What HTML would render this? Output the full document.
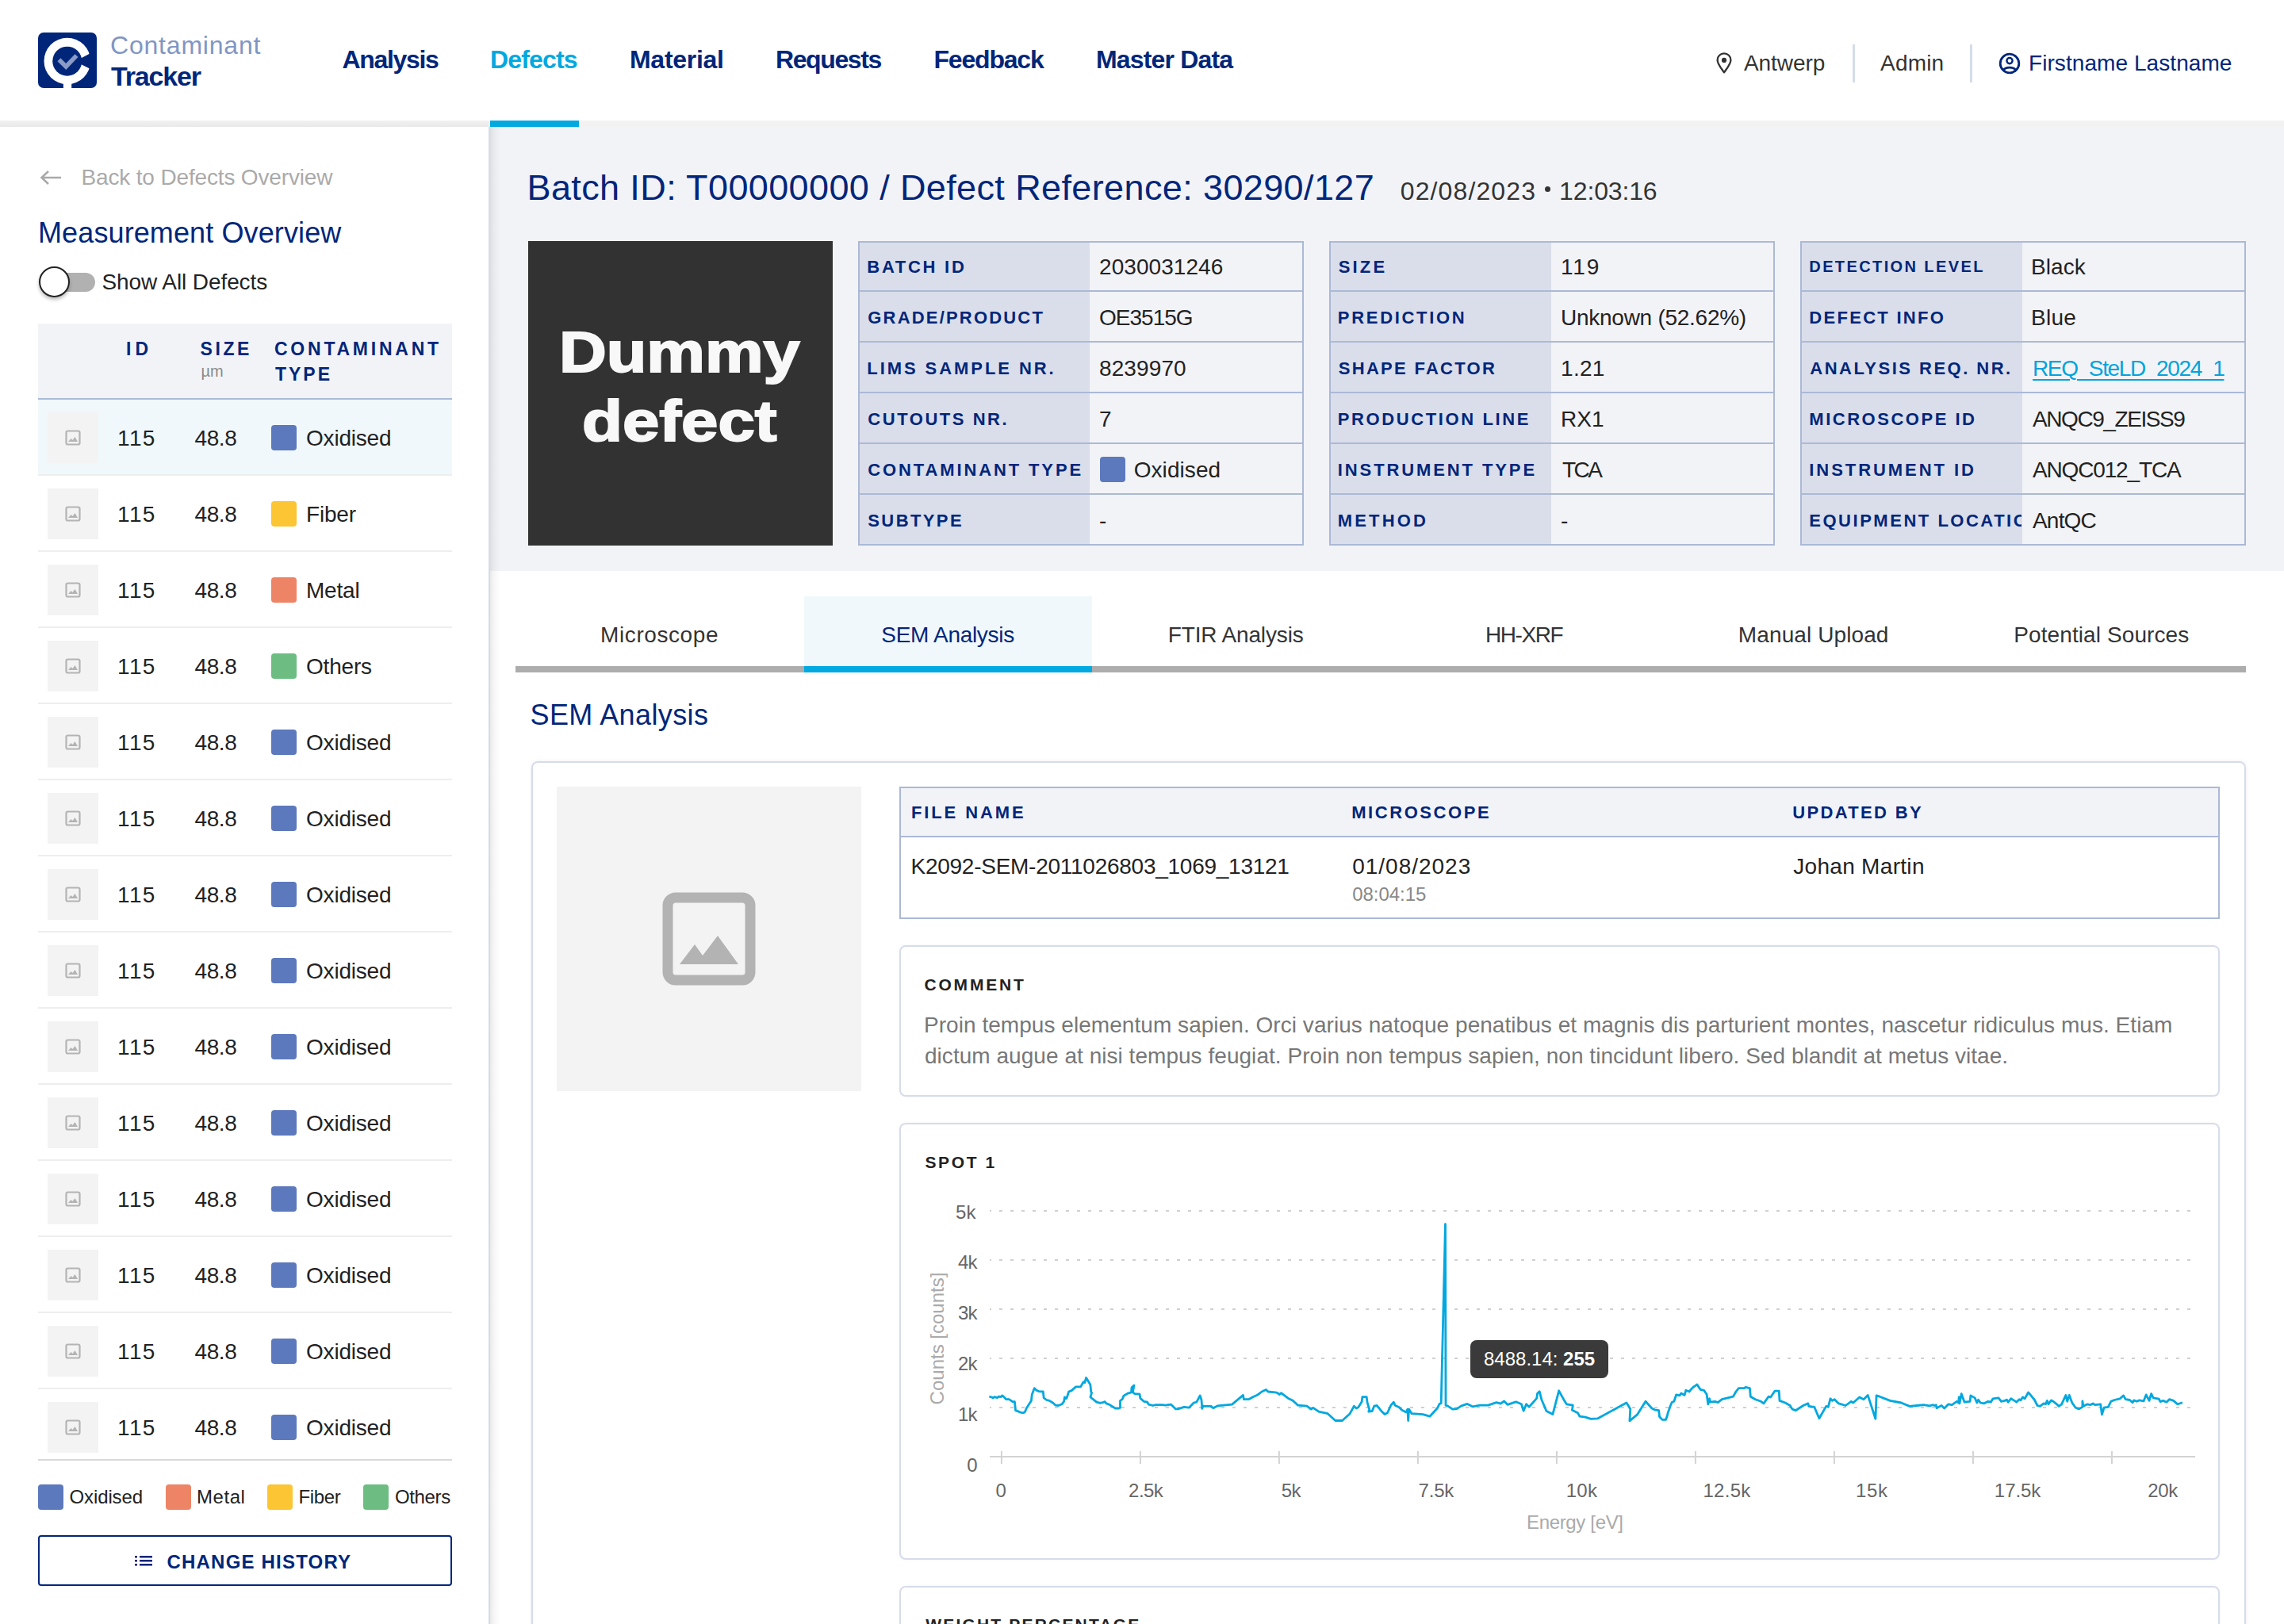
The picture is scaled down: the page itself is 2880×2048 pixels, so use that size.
<!DOCTYPE html>
<html><head><meta charset="utf-8">
<style>
*{box-sizing:border-box;margin:0;padding:0}
html,body{width:2880px;height:2048px;overflow:hidden;background:#fff;font-family:"Liberation Sans",sans-serif;color:#222}
@media (max-width:1600px){html{zoom:0.5}}
.a{position:absolute}
.t{position:absolute;white-space:nowrap}
</style></head><body>

<div class="a" style="left:616px;top:152px;width:2264px;height:568px;background:#f2f3f7"></div>
<div class="a" style="left:0;top:0;width:2880px;height:152px;background:#fff"></div>
<div class="a" style="left:0;top:152px;width:2880px;height:8px;background:#f2f2f2"></div><div class="a" style="left:0;top:152px;width:616px;height:8px;background:linear-gradient(#f1f1f1,#e9e9e9)"></div>
<div class="a" style="left:618px;top:152px;width:112px;height:8px;background:#00a9e0"></div>
<svg class="a" style="left:48px;top:41px" width="74" height="70" viewBox="0 0 74 70">
<rect x="0" y="0" width="74" height="70" rx="7" fill="#00267a"/>
<circle cx="36.8" cy="36" r="29.3" fill="#fff"/>
<circle cx="36.75" cy="36.15" r="18.5" fill="#00267a"/>
<polygon points="53,33 74,21.9 74,50.1 53,39.4" fill="#00267a"/>
<rect x="31.9" y="60" width="10.3" height="11" fill="#fff"/>
<polyline points="26.4,34.2 35.2,43 48.5,29.2" fill="none" stroke="#8a9bc6" stroke-width="5.5"/>
</svg>
<svg class="a" style="left:2162px;top:65px" width="24" height="30" viewBox="0 0 24 30">
<path d="M12 26.3 C7.6 20 3.6 15.6 3.6 10.7 A8.4 8.4 0 0 1 20.4 10.7 C20.4 15.6 16.4 20 12 26.3 Z" fill="none" stroke="#333" stroke-width="2.3" stroke-linejoin="round"/>
<circle cx="12" cy="10.9" r="3.1" fill="#333"/></svg>
<div class="a" style="left:2336px;top:56px;width:3px;height:48px;background:#d5dcea"></div>
<div class="a" style="left:2484px;top:56px;width:3px;height:48px;background:#d5dcea"></div>
<svg class="a" style="left:2519px;top:65px" width="30" height="30" viewBox="0 0 30 30">
<circle cx="15" cy="15" r="11.8" fill="none" stroke="#00267a" stroke-width="2.8"/>
<circle cx="15" cy="11.6" r="3.6" fill="none" stroke="#00267a" stroke-width="2.4"/>
<path d="M7 23.5 C10 19 20 19 23 23.5" fill="none" stroke="#00267a" stroke-width="2.6"/></svg>
<div class="a" style="left:0;top:160px;width:616px;height:1888px;background:#fff"></div>
<div class="a" style="left:616px;top:160px;width:2px;height:1888px;background:#d7dcea"></div>
<div class="a" style="left:618px;top:160px;width:14px;height:1888px;background:linear-gradient(90deg,rgba(0,0,0,0.085),rgba(0,0,0,0.035) 35%,rgba(0,0,0,0) 100%)"></div>
<svg class="a" style="left:48px;top:212px" width="32" height="24" viewBox="0 0 32 24">
<path d="M29 12 H5 M13 4 L4.5 12 L13 20" fill="none" stroke="#aaa" stroke-width="2.6"/></svg>
<div class="a" style="left:62px;top:344px;width:58px;height:24px;border-radius:12px;background:#b1b1b1"></div>
<div class="a" style="left:48.5px;top:336px;width:39px;height:39px;border-radius:50%;background:#fff;border:2.5px solid #222;box-shadow:0 3px 4px rgba(0,0,0,0.25)"></div>
<div class="a" style="left:48px;top:408px;width:522px;height:94px;background:#f2f3f7"></div>
<div class="a" style="left:48px;top:502px;width:522px;height:2px;background:#a9b9d8"></div>
<div class="a" style="left:48px;top:504px;width:522px;height:94px;background:#f0f8fb"></div>
<div class="a" style="left:48px;top:598px;width:522px;height:2px;background:#eeeeee"></div>
<div class="a" style="left:60px;top:520px;width:64px;height:64px;background:#f3f3f3"></div>
<div class="a" style="left:82px;top:542px;width:20px;height:20px"><svg width="20" height="20" viewBox="0 0 20 20"><rect x="1.5" y="1.5" width="17" height="17" rx="2" fill="none" stroke="#b4b4b4" stroke-width="2.2"/><path d="M4 15 L7.5 11 L9.5 13 L12.5 9 L16 15 Z" fill="#b4b4b4"/></svg></div>
<div class="a" style="left:342px;top:536px;width:32px;height:32px;border-radius:4px;background:#5d79bd"></div>
<div class="a" style="left:48px;top:694px;width:522px;height:2px;background:#eeeeee"></div>
<div class="a" style="left:60px;top:616px;width:64px;height:64px;background:#f3f3f3"></div>
<div class="a" style="left:82px;top:638px;width:20px;height:20px"><svg width="20" height="20" viewBox="0 0 20 20"><rect x="1.5" y="1.5" width="17" height="17" rx="2" fill="none" stroke="#b4b4b4" stroke-width="2.2"/><path d="M4 15 L7.5 11 L9.5 13 L12.5 9 L16 15 Z" fill="#b4b4b4"/></svg></div>
<div class="a" style="left:342px;top:632px;width:32px;height:32px;border-radius:4px;background:#fbc533"></div>
<div class="a" style="left:48px;top:790px;width:522px;height:2px;background:#eeeeee"></div>
<div class="a" style="left:60px;top:712px;width:64px;height:64px;background:#f3f3f3"></div>
<div class="a" style="left:82px;top:734px;width:20px;height:20px"><svg width="20" height="20" viewBox="0 0 20 20"><rect x="1.5" y="1.5" width="17" height="17" rx="2" fill="none" stroke="#b4b4b4" stroke-width="2.2"/><path d="M4 15 L7.5 11 L9.5 13 L12.5 9 L16 15 Z" fill="#b4b4b4"/></svg></div>
<div class="a" style="left:342px;top:728px;width:32px;height:32px;border-radius:4px;background:#ee8466"></div>
<div class="a" style="left:48px;top:886px;width:522px;height:2px;background:#eeeeee"></div>
<div class="a" style="left:60px;top:808px;width:64px;height:64px;background:#f3f3f3"></div>
<div class="a" style="left:82px;top:830px;width:20px;height:20px"><svg width="20" height="20" viewBox="0 0 20 20"><rect x="1.5" y="1.5" width="17" height="17" rx="2" fill="none" stroke="#b4b4b4" stroke-width="2.2"/><path d="M4 15 L7.5 11 L9.5 13 L12.5 9 L16 15 Z" fill="#b4b4b4"/></svg></div>
<div class="a" style="left:342px;top:824px;width:32px;height:32px;border-radius:4px;background:#6dbd82"></div>
<div class="a" style="left:48px;top:982px;width:522px;height:2px;background:#eeeeee"></div>
<div class="a" style="left:60px;top:904px;width:64px;height:64px;background:#f3f3f3"></div>
<div class="a" style="left:82px;top:926px;width:20px;height:20px"><svg width="20" height="20" viewBox="0 0 20 20"><rect x="1.5" y="1.5" width="17" height="17" rx="2" fill="none" stroke="#b4b4b4" stroke-width="2.2"/><path d="M4 15 L7.5 11 L9.5 13 L12.5 9 L16 15 Z" fill="#b4b4b4"/></svg></div>
<div class="a" style="left:342px;top:920px;width:32px;height:32px;border-radius:4px;background:#5d79bd"></div>
<div class="a" style="left:48px;top:1078px;width:522px;height:2px;background:#eeeeee"></div>
<div class="a" style="left:60px;top:1000px;width:64px;height:64px;background:#f3f3f3"></div>
<div class="a" style="left:82px;top:1022px;width:20px;height:20px"><svg width="20" height="20" viewBox="0 0 20 20"><rect x="1.5" y="1.5" width="17" height="17" rx="2" fill="none" stroke="#b4b4b4" stroke-width="2.2"/><path d="M4 15 L7.5 11 L9.5 13 L12.5 9 L16 15 Z" fill="#b4b4b4"/></svg></div>
<div class="a" style="left:342px;top:1016px;width:32px;height:32px;border-radius:4px;background:#5d79bd"></div>
<div class="a" style="left:48px;top:1174px;width:522px;height:2px;background:#eeeeee"></div>
<div class="a" style="left:60px;top:1096px;width:64px;height:64px;background:#f3f3f3"></div>
<div class="a" style="left:82px;top:1118px;width:20px;height:20px"><svg width="20" height="20" viewBox="0 0 20 20"><rect x="1.5" y="1.5" width="17" height="17" rx="2" fill="none" stroke="#b4b4b4" stroke-width="2.2"/><path d="M4 15 L7.5 11 L9.5 13 L12.5 9 L16 15 Z" fill="#b4b4b4"/></svg></div>
<div class="a" style="left:342px;top:1112px;width:32px;height:32px;border-radius:4px;background:#5d79bd"></div>
<div class="a" style="left:48px;top:1270px;width:522px;height:2px;background:#eeeeee"></div>
<div class="a" style="left:60px;top:1192px;width:64px;height:64px;background:#f3f3f3"></div>
<div class="a" style="left:82px;top:1214px;width:20px;height:20px"><svg width="20" height="20" viewBox="0 0 20 20"><rect x="1.5" y="1.5" width="17" height="17" rx="2" fill="none" stroke="#b4b4b4" stroke-width="2.2"/><path d="M4 15 L7.5 11 L9.5 13 L12.5 9 L16 15 Z" fill="#b4b4b4"/></svg></div>
<div class="a" style="left:342px;top:1208px;width:32px;height:32px;border-radius:4px;background:#5d79bd"></div>
<div class="a" style="left:48px;top:1366px;width:522px;height:2px;background:#eeeeee"></div>
<div class="a" style="left:60px;top:1288px;width:64px;height:64px;background:#f3f3f3"></div>
<div class="a" style="left:82px;top:1310px;width:20px;height:20px"><svg width="20" height="20" viewBox="0 0 20 20"><rect x="1.5" y="1.5" width="17" height="17" rx="2" fill="none" stroke="#b4b4b4" stroke-width="2.2"/><path d="M4 15 L7.5 11 L9.5 13 L12.5 9 L16 15 Z" fill="#b4b4b4"/></svg></div>
<div class="a" style="left:342px;top:1304px;width:32px;height:32px;border-radius:4px;background:#5d79bd"></div>
<div class="a" style="left:48px;top:1462px;width:522px;height:2px;background:#eeeeee"></div>
<div class="a" style="left:60px;top:1384px;width:64px;height:64px;background:#f3f3f3"></div>
<div class="a" style="left:82px;top:1406px;width:20px;height:20px"><svg width="20" height="20" viewBox="0 0 20 20"><rect x="1.5" y="1.5" width="17" height="17" rx="2" fill="none" stroke="#b4b4b4" stroke-width="2.2"/><path d="M4 15 L7.5 11 L9.5 13 L12.5 9 L16 15 Z" fill="#b4b4b4"/></svg></div>
<div class="a" style="left:342px;top:1400px;width:32px;height:32px;border-radius:4px;background:#5d79bd"></div>
<div class="a" style="left:48px;top:1558px;width:522px;height:2px;background:#eeeeee"></div>
<div class="a" style="left:60px;top:1480px;width:64px;height:64px;background:#f3f3f3"></div>
<div class="a" style="left:82px;top:1502px;width:20px;height:20px"><svg width="20" height="20" viewBox="0 0 20 20"><rect x="1.5" y="1.5" width="17" height="17" rx="2" fill="none" stroke="#b4b4b4" stroke-width="2.2"/><path d="M4 15 L7.5 11 L9.5 13 L12.5 9 L16 15 Z" fill="#b4b4b4"/></svg></div>
<div class="a" style="left:342px;top:1496px;width:32px;height:32px;border-radius:4px;background:#5d79bd"></div>
<div class="a" style="left:48px;top:1654px;width:522px;height:2px;background:#eeeeee"></div>
<div class="a" style="left:60px;top:1576px;width:64px;height:64px;background:#f3f3f3"></div>
<div class="a" style="left:82px;top:1598px;width:20px;height:20px"><svg width="20" height="20" viewBox="0 0 20 20"><rect x="1.5" y="1.5" width="17" height="17" rx="2" fill="none" stroke="#b4b4b4" stroke-width="2.2"/><path d="M4 15 L7.5 11 L9.5 13 L12.5 9 L16 15 Z" fill="#b4b4b4"/></svg></div>
<div class="a" style="left:342px;top:1592px;width:32px;height:32px;border-radius:4px;background:#5d79bd"></div>
<div class="a" style="left:48px;top:1750px;width:522px;height:2px;background:#eeeeee"></div>
<div class="a" style="left:60px;top:1672px;width:64px;height:64px;background:#f3f3f3"></div>
<div class="a" style="left:82px;top:1694px;width:20px;height:20px"><svg width="20" height="20" viewBox="0 0 20 20"><rect x="1.5" y="1.5" width="17" height="17" rx="2" fill="none" stroke="#b4b4b4" stroke-width="2.2"/><path d="M4 15 L7.5 11 L9.5 13 L12.5 9 L16 15 Z" fill="#b4b4b4"/></svg></div>
<div class="a" style="left:342px;top:1688px;width:32px;height:32px;border-radius:4px;background:#5d79bd"></div>
<div class="a" style="left:60px;top:1768px;width:64px;height:64px;background:#f3f3f3"></div>
<div class="a" style="left:82px;top:1790px;width:20px;height:20px"><svg width="20" height="20" viewBox="0 0 20 20"><rect x="1.5" y="1.5" width="17" height="17" rx="2" fill="none" stroke="#b4b4b4" stroke-width="2.2"/><path d="M4 15 L7.5 11 L9.5 13 L12.5 9 L16 15 Z" fill="#b4b4b4"/></svg></div>
<div class="a" style="left:342px;top:1784px;width:32px;height:32px;border-radius:4px;background:#5d79bd"></div>
<div class="a" style="left:48px;top:1840px;width:522px;height:2px;background:#d9d9d9"></div>
<div class="a" style="left:48px;top:1872px;width:32px;height:32px;border-radius:4px;background:#5d79bd"></div>
<div class="a" style="left:209px;top:1872px;width:32px;height:32px;border-radius:4px;background:#ee8466"></div>
<div class="a" style="left:337px;top:1872px;width:32px;height:32px;border-radius:4px;background:#fbc533"></div>
<div class="a" style="left:458px;top:1872px;width:32px;height:32px;border-radius:4px;background:#6dbd82"></div>
<div class="a" style="left:48px;top:1936px;width:522px;height:64px;border:2.5px solid #00267a;border-radius:4px"></div>
<svg class="a" style="left:168px;top:1958px" width="26" height="20" viewBox="0 0 26 20">
<rect x="2" y="4" width="3" height="2.5" fill="#00267a"/><rect x="8" y="4" width="16" height="2.5" fill="#00267a"/>
<rect x="2" y="9" width="3" height="2.5" fill="#00267a"/><rect x="8" y="9" width="16" height="2.5" fill="#00267a"/>
<rect x="2" y="14" width="3" height="2.5" fill="#00267a"/><rect x="8" y="14" width="16" height="2.5" fill="#00267a"/></svg>
<div class="a" style="left:666px;top:304px;width:384px;height:384px;background:#323232"></div>
<div class="a" style="left:1947.8px;top:234.9px;width:7px;height:7px;border-radius:50%;background:#333"></div>
<div class="a" style="left:1082px;top:304px;width:562px;height:384px;border:2px solid #abb9d6;background:#f2f3f7"></div>
<div class="a" style="left:1084px;top:306px;width:290px;height:380px;background:#dadeea"></div>
<div class="a" style="left:1084px;top:366px;width:558px;height:2px;background:#abb9d6"></div>
<div class="a" style="left:1084px;top:430px;width:558px;height:2px;background:#abb9d6"></div>
<div class="a" style="left:1084px;top:494px;width:558px;height:2px;background:#abb9d6"></div>
<div class="a" style="left:1084px;top:558px;width:558px;height:2px;background:#abb9d6"></div>
<div class="a" style="left:1084px;top:622px;width:558px;height:2px;background:#abb9d6"></div>
<div class="a" style="left:1676px;top:304px;width:562px;height:384px;border:2px solid #abb9d6;background:#f2f3f7"></div>
<div class="a" style="left:1678px;top:306px;width:278px;height:380px;background:#dadeea"></div>
<div class="a" style="left:1678px;top:366px;width:558px;height:2px;background:#abb9d6"></div>
<div class="a" style="left:1678px;top:430px;width:558px;height:2px;background:#abb9d6"></div>
<div class="a" style="left:1678px;top:494px;width:558px;height:2px;background:#abb9d6"></div>
<div class="a" style="left:1678px;top:558px;width:558px;height:2px;background:#abb9d6"></div>
<div class="a" style="left:1678px;top:622px;width:558px;height:2px;background:#abb9d6"></div>
<div class="a" style="left:2270px;top:304px;width:562px;height:384px;border:2px solid #abb9d6;background:#f2f3f7"></div>
<div class="a" style="left:2272px;top:306px;width:278px;height:380px;background:#dadeea"></div>
<div class="a" style="left:2272px;top:366px;width:558px;height:2px;background:#abb9d6"></div>
<div class="a" style="left:2272px;top:430px;width:558px;height:2px;background:#abb9d6"></div>
<div class="a" style="left:2272px;top:494px;width:558px;height:2px;background:#abb9d6"></div>
<div class="a" style="left:2272px;top:558px;width:558px;height:2px;background:#abb9d6"></div>
<div class="a" style="left:2272px;top:622px;width:558px;height:2px;background:#abb9d6"></div>
<div class="a" style="left:1387px;top:576px;width:32px;height:32px;border-radius:4px;background:#5d79bd"></div>
<div class="a" style="left:1014px;top:752px;width:363px;height:88px;background:#f0f8fb"></div>
<div class="a" style="left:650px;top:840px;width:2182px;height:8px;background:#adadad"></div>
<div class="a" style="left:1014px;top:840px;width:363px;height:8px;background:#00a9e0"></div>
<div class="a" style="left:670px;top:960px;width:2162px;height:1200px;border:2px solid #d6dcec;border-radius:8px;box-shadow:0 0 5px rgba(0,0,0,0.07)"></div>
<div class="a" style="left:702px;top:992px;width:384px;height:384px;background:#f3f3f3"></div>
<svg class="a" style="left:834px;top:1124px" width="120" height="120" viewBox="0 0 120 120">
<rect x="8" y="8" width="104" height="104" rx="10" fill="none" stroke="#b3b3b3" stroke-width="13"/>
<path d="M23 92 L42 67 L52 81 L71 56 L97 92 Z" fill="#b3b3b3"/></svg>
<div class="a" style="left:1134px;top:992px;width:1665px;height:167px;border:2px solid #abb9d6;background:#fff"></div>
<div class="a" style="left:1136px;top:994px;width:1661px;height:60px;background:#f2f3f7"></div>
<div class="a" style="left:1136px;top:1054px;width:1661px;height:2px;background:#abb9d6"></div>
<div class="a" style="left:1134px;top:1192px;width:1665px;height:191px;border:2px solid #d6dcec;border-radius:8px;box-shadow:0 0 4px rgba(0,0,0,0.04)"></div>
<div class="a" style="left:1134px;top:1416px;width:1665px;height:551px;border:2px solid #d6dcec;border-radius:8px;box-shadow:0 0 4px rgba(0,0,0,0.04)"></div>
<div class="a" style="left:1134px;top:2000px;width:1665px;height:200px;border:2px solid #d6dcec;border-radius:8px;box-shadow:0 0 4px rgba(0,0,0,0.04)"></div>
<svg class="a" style="left:0;top:0" width="2880" height="2048" viewBox="0 0 2880 2048"><line x1="1248" y1="1527.0" x2="2768" y2="1527.0" stroke="#d0d0d0" stroke-width="2" stroke-dasharray="4 10" stroke-dashoffset="2"/><line x1="1248" y1="1589.0" x2="2768" y2="1589.0" stroke="#d0d0d0" stroke-width="2" stroke-dasharray="4 10" stroke-dashoffset="2"/><line x1="1248" y1="1651.0" x2="2768" y2="1651.0" stroke="#d0d0d0" stroke-width="2" stroke-dasharray="4 10" stroke-dashoffset="2"/><line x1="1248" y1="1713.0" x2="2768" y2="1713.0" stroke="#d0d0d0" stroke-width="2" stroke-dasharray="4 10" stroke-dashoffset="2"/><line x1="1248" y1="1775.0" x2="2768" y2="1775.0" stroke="#d0d0d0" stroke-width="2" stroke-dasharray="4 10" stroke-dashoffset="2"/><line x1="1248" y1="1837" x2="2768" y2="1837" stroke="#d3d3d3" stroke-width="2"/><line x1="1262.9" y1="1830" x2="1262.9" y2="1846" stroke="#d3d3d3" stroke-width="2"/><line x1="1437.9" y1="1830" x2="1437.9" y2="1846" stroke="#d3d3d3" stroke-width="2"/><line x1="1612.9" y1="1830" x2="1612.9" y2="1846" stroke="#d3d3d3" stroke-width="2"/><line x1="1787.9" y1="1830" x2="1787.9" y2="1846" stroke="#d3d3d3" stroke-width="2"/><line x1="1962.9" y1="1830" x2="1962.9" y2="1846" stroke="#d3d3d3" stroke-width="2"/><line x1="2137.9" y1="1830" x2="2137.9" y2="1846" stroke="#d3d3d3" stroke-width="2"/><line x1="2312.9" y1="1830" x2="2312.9" y2="1846" stroke="#d3d3d3" stroke-width="2"/><line x1="2487.9" y1="1830" x2="2487.9" y2="1846" stroke="#d3d3d3" stroke-width="2"/><line x1="2662.9" y1="1830" x2="2662.9" y2="1846" stroke="#d3d3d3" stroke-width="2"/><path d="M1247.4 1761.2 L1250.5 1762.0 L1252.3 1762.9 L1254.0 1761.7 L1257.5 1762.6 L1259.3 1761.2 L1261.9 1761.7 L1263.6 1759.9 L1265.4 1761.2 L1268.9 1764.7 L1272.4 1764.7 L1275.0 1766.4 L1276.8 1767.6 L1279.4 1767.6 L1280.6 1778.7 L1283.8 1779.9 L1287.3 1781.3 L1290.8 1781.6 L1292.5 1780.4 L1294.3 1776.0 L1298.7 1769.0 L1300.4 1766.4 L1301.3 1758.5 L1304.4 1750.6 L1306.5 1752.9 L1310.1 1754.7 L1315.3 1755.0 L1316.2 1762.9 L1319.7 1765.5 L1323.2 1766.4 L1327.6 1769.0 L1331.1 1772.2 L1334.6 1772.5 L1338.9 1770.8 L1341.6 1767.3 L1342.5 1762.0 L1344.2 1763.8 L1345.1 1762.9 L1347.7 1755.0 L1351.2 1753.6 L1356.5 1748.9 L1362.6 1748.9 L1366.1 1742.8 L1367.8 1743.6 L1369.6 1737.5 L1374.9 1746.3 L1375.7 1755.0 L1376.6 1756.4 L1374.9 1762.0 L1378.4 1764.7 L1382.7 1768.2 L1387.1 1769.4 L1390.6 1768.7 L1393.2 1767.6 L1395.0 1769.9 L1398.5 1771.1 L1406.4 1776.0 L1410.8 1776.0 L1412.5 1775.2 L1412.5 1766.4 L1415.1 1764.7 L1416.9 1760.3 L1422.1 1757.1 L1426.5 1755.9 L1427.0 1749.8 L1430.0 1747.1 L1428.3 1755.9 L1430.9 1757.7 L1437.0 1758.2 L1437.9 1763.4 L1442.3 1767.3 L1446.7 1768.2 L1448.4 1771.1 L1453.7 1772.5 L1457.2 1771.7 L1465.9 1771.7 L1469.4 1772.2 L1476.4 1771.1 L1482.6 1776.9 L1485.2 1776.9 L1493.1 1774.3 L1499.2 1775.2 L1505.3 1769.0 L1508.8 1768.2 L1513.2 1759.9 L1515.0 1765.5 L1515.8 1776.4 L1516.7 1773.4 L1527.2 1773.4 L1529.8 1775.7 L1535.1 1772.9 L1553.5 1771.1 L1567.5 1759.4 L1568.4 1764.7 L1574.5 1764.7 L1579.8 1761.7 L1585.9 1758.9 L1591.1 1755.0 L1596.4 1752.4 L1599.0 1755.0 L1607.8 1755.9 L1610.4 1756.4 L1613.0 1758.5 L1615.7 1756.8 L1624.4 1763.4 L1629.7 1765.9 L1636.7 1772.2 L1647.9 1773.1 L1653.1 1777.1 L1655.8 1775.3 L1662.8 1780.1 L1674.2 1782.7 L1683.8 1791.5 L1692.5 1791.5 L1702.2 1782.7 L1707.4 1773.1 L1710.1 1776.0 L1712.7 1774.8 L1717.1 1767.8 L1717.9 1761.7 L1723.2 1761.7 L1724.1 1768.7 L1726.7 1777.4 L1725.8 1780.1 L1730.2 1779.5 L1732.8 1773.1 L1736.3 1772.5 L1741.6 1779.2 L1746.0 1783.6 L1749.5 1781.8 L1753.8 1772.2 L1757.3 1768.3 L1759.1 1772.2 L1764.3 1774.8 L1767.8 1778.3 L1773.1 1780.9 L1774.9 1777.1 L1775.7 1791.5 L1776.6 1777.1 L1780.1 1782.7 L1794.1 1783.6 L1802.9 1786.2 L1812.5 1775.7 L1815.1 1770.4 L1817.2 1769.6 L1822.5 1543.6 L1823.0 1772.2 L1825.6 1773.1 L1831.8 1777.1 L1837.0 1776.6 L1842.3 1773.1 L1850.2 1770.4 L1857.2 1773.9 L1865.9 1772.2 L1876.4 1772.2 L1886.9 1768.7 L1892.2 1770.1 L1896.6 1766.9 L1900.9 1771.3 L1911.5 1767.8 L1918.5 1770.8 L1921.1 1779.2 L1924.6 1770.8 L1928.1 1774.3 L1937.7 1763.4 L1938.6 1757.3 L1941.2 1754.7 L1943.9 1765.2 L1950.0 1779.5 L1957.9 1783.6 L1965.7 1753.8 L1971.9 1765.2 L1975.4 1770.8 L1983.3 1772.2 L1982.4 1778.3 L1989.4 1781.8 L1992.0 1786.2 L1999.0 1787.1 L2006.0 1789.4 L2014.8 1788.8 L2050.9 1769.0 L2053.1 1772.5 L2055.8 1776.9 L2054.9 1791.8 L2064.5 1783.9 L2075.0 1767.3 L2082.9 1776.0 L2086.4 1777.8 L2091.7 1778.7 L2092.5 1786.5 L2096.0 1790.4 L2100.4 1790.4 L2102.2 1785.7 L2103.0 1782.2 L2106.5 1772.2 L2108.3 1768.2 L2110.9 1767.3 L2113.6 1758.9 L2117.9 1759.9 L2119.7 1757.1 L2124.1 1759.4 L2125.8 1753.3 L2130.2 1755.0 L2131.9 1752.4 L2135.4 1748.9 L2137.2 1748.0 L2139.8 1745.9 L2144.2 1752.4 L2148.6 1753.3 L2152.1 1758.5 L2153.8 1770.8 L2155.6 1763.8 L2156.5 1768.2 L2162.6 1767.3 L2166.1 1768.7 L2171.3 1764.7 L2178.4 1762.9 L2185.4 1761.2 L2188.9 1755.0 L2192.4 1750.6 L2199.4 1750.6 L2201.1 1749.4 L2206.4 1750.6 L2207.3 1761.2 L2213.4 1764.7 L2220.4 1767.3 L2223.9 1769.9 L2230.0 1761.2 L2232.6 1762.0 L2237.9 1754.2 L2243.2 1754.2 L2244.0 1766.4 L2251.0 1769.0 L2257.2 1772.5 L2259.8 1776.9 L2264.2 1778.7 L2273.8 1772.5 L2279.9 1769.9 L2280.8 1773.4 L2287.8 1774.3 L2293.9 1788.7 L2302.7 1773.4 L2305.3 1774.3 L2308.0 1763.8 L2310.6 1766.4 L2313.2 1764.7 L2318.5 1769.9 L2327.2 1772.5 L2334.2 1767.3 L2336.8 1769.0 L2344.7 1762.0 L2350.0 1764.7 L2355.2 1759.4 L2364.9 1789.2 L2366.1 1759.9 L2370.1 1761.2 L2383.3 1766.4 L2397.3 1769.0 L2407.8 1773.4 L2407.9 1773.4 L2417.5 1772.5 L2425.4 1771.7 L2433.3 1772.9 L2436.8 1771.7 L2439.4 1772.5 L2441.2 1771.7 L2442.0 1775.7 L2448.2 1772.5 L2451.7 1776.0 L2456.9 1770.8 L2461.3 1771.7 L2467.4 1767.3 L2469.7 1769.0 L2470.1 1762.0 L2470.9 1769.9 L2473.2 1757.7 L2477.1 1768.2 L2484.1 1767.3 L2484.9 1759.9 L2490.2 1762.9 L2492.8 1769.0 L2494.6 1765.2 L2497.2 1769.0 L2501.6 1769.9 L2506.8 1767.3 L2510.3 1768.2 L2513.0 1763.8 L2520.0 1762.9 L2523.5 1767.3 L2527.8 1766.4 L2530.5 1765.2 L2532.2 1768.2 L2535.7 1763.8 L2540.1 1766.4 L2542.7 1768.2 L2546.2 1764.7 L2548.0 1765.9 L2550.6 1762.0 L2553.2 1763.8 L2557.6 1755.9 L2562.0 1761.2 L2565.5 1765.5 L2569.0 1772.5 L2572.5 1773.4 L2576.9 1769.9 L2579.5 1770.8 L2581.3 1766.4 L2583.0 1770.8 L2586.5 1765.9 L2589.1 1767.3 L2593.5 1770.8 L2596.1 1773.4 L2599.6 1770.8 L2604.9 1759.4 L2606.7 1767.3 L2609.3 1759.4 L2612.8 1769.0 L2617.2 1775.2 L2621.5 1776.9 L2625.9 1774.3 L2625.9 1766.9 L2626.8 1773.4 L2632.0 1770.8 L2635.6 1771.7 L2639.1 1769.9 L2641.7 1771.7 L2648.7 1770.8 L2650.4 1783.9 L2653.1 1775.2 L2658.3 1774.3 L2661.8 1767.3 L2666.2 1765.5 L2673.2 1763.8 L2677.6 1759.9 L2680.2 1764.7 L2685.5 1765.5 L2689.0 1768.7 L2690.7 1765.9 L2694.2 1767.3 L2697.7 1765.9 L2703.0 1766.9 L2706.1 1758.9 L2710.0 1766.4 L2712.6 1757.7 L2715.2 1762.9 L2722.2 1764.1 L2724.0 1767.6 L2727.5 1766.4 L2731.9 1768.2 L2735.4 1764.7 L2740.6 1766.4 L2745.9 1770.8 L2752.0 1768.7" fill="none" stroke="#00a8df" stroke-width="2.8" stroke-linejoin="round"/></svg>
<div class="t" id="counts" style="left:1181.5px;top:1688px;font-size:24px;line-height:24px;color:#aaa;transform:translate(-50%,-50%) rotate(-90deg)">Counts [counts]</div>
<div class="a" style="left:1854px;top:1690px;width:174px;height:48px;border-radius:8px;background:#3a3a3a"></div>
<div class="t" id="tip" style="left:1871px;top:1702.08px;font-size:24px;line-height:24px;color:#fff">8488.14: <b>255</b></div>
<div id="nav1" class="t" style="left:431.50px;top:58.81px;font-size:32px;line-height:32px;color:#00267a;font-weight:bold;letter-spacing:-1.343px;">Analysis</div>
<div id="nav2" class="t" style="left:618.00px;top:58.81px;font-size:32px;line-height:32px;color:#00a9e0;font-weight:bold;letter-spacing:-0.833px;">Defects</div>
<div id="nav3" class="t" style="left:794.00px;top:58.81px;font-size:32px;line-height:32px;color:#00267a;font-weight:bold;letter-spacing:-0.286px;">Material</div>
<div id="nav4" class="t" style="left:978.00px;top:58.81px;font-size:32px;line-height:32px;color:#00267a;font-weight:bold;letter-spacing:-1.400px;">Requests</div>
<div id="nav5" class="t" style="left:1177.50px;top:58.81px;font-size:32px;line-height:32px;color:#00267a;font-weight:bold;letter-spacing:-1.200px;">Feedback</div>
<div id="nav6" class="t" style="left:1382.00px;top:58.81px;font-size:32px;line-height:32px;color:#00267a;font-weight:bold;letter-spacing:-0.840px;">Master Data</div>
<div id="logo1" class="t" style="left:139.00px;top:40.91px;font-size:32px;line-height:32px;color:#7f96c4;font-weight:normal;letter-spacing:0.800px;">Contaminant</div>
<div id="logo2" class="t" style="left:140.00px;top:79.42px;font-size:34px;line-height:34px;color:#00267a;font-weight:bold;letter-spacing:-1.167px;">Tracker</div>
<div id="hloc" class="t" style="left:2199.00px;top:66.40px;font-size:28px;line-height:28px;color:#333;font-weight:normal;letter-spacing:-0.067px;">Antwerp</div>
<div id="hadm" class="t" style="left:2371.00px;top:66.40px;font-size:28px;line-height:28px;color:#333;font-weight:normal;letter-spacing:0.200px;">Admin</div>
<div id="husr" class="t" style="left:2558.00px;top:66.40px;font-size:28px;line-height:28px;color:#00267a;font-weight:normal;letter-spacing:0.071px;">Firstname Lastname</div>
<div id="back" class="t" style="left:102.50px;top:210.10px;font-size:28px;line-height:28px;color:#aaa;font-weight:normal;letter-spacing:-0.157px;">Back to Defects Overview</div>
<div id="mtitle" class="t" style="left:48.00px;top:275.53px;font-size:36px;line-height:36px;color:#00267a;font-weight:normal;letter-spacing:0.116px;">Measurement Overview</div>
<div id="showall" class="t" style="left:128.50px;top:341.80px;font-size:28px;line-height:28px;color:#222;font-weight:normal;letter-spacing:-0.093px;">Show All Defects</div>
<div id="thid" class="t" style="left:159.00px;top:429.03px;font-size:23px;line-height:23px;color:#00267a;font-weight:bold;letter-spacing:5.000px;">ID</div>
<div id="thsize" class="t" style="left:252.50px;top:429.03px;font-size:23px;line-height:23px;color:#00267a;font-weight:bold;letter-spacing:3.600px;">SIZE</div>
<div id="thct" class="t" style="left:346.00px;top:429.03px;font-size:23px;line-height:23px;color:#00267a;font-weight:bold;letter-spacing:3.760px;">CONTAMINANT</div>
<div id="thtype" class="t" style="left:347.00px;top:460.93px;font-size:23px;line-height:23px;color:#00267a;font-weight:bold;letter-spacing:2.987px;">TYPE</div>
<div id="thum" class="t" style="left:253.50px;top:457.57px;font-size:20px;line-height:20px;color:#8a8a8a;font-weight:normal;letter-spacing:0.000px;">µm</div>
<div id="rid0" class="t" style="left:148.00px;top:538.70px;font-size:28px;line-height:28px;color:#222;font-weight:normal;letter-spacing:1.400px;">115</div>
<div id="rsz0" class="t" style="left:245.50px;top:538.70px;font-size:28px;line-height:28px;color:#222;font-weight:normal;letter-spacing:-0.400px;">48.8</div>
<div id="rty0" class="t" style="left:386.00px;top:538.70px;font-size:28px;line-height:28px;color:#222;font-weight:normal;letter-spacing:-0.200px;">Oxidised</div>
<div id="rid1" class="t" style="left:148.00px;top:634.70px;font-size:28px;line-height:28px;color:#222;font-weight:normal;letter-spacing:1.400px;">115</div>
<div id="rsz1" class="t" style="left:245.50px;top:634.70px;font-size:28px;line-height:28px;color:#222;font-weight:normal;letter-spacing:-0.400px;">48.8</div>
<div id="rty1" class="t" style="left:386.00px;top:634.70px;font-size:28px;line-height:28px;color:#222;font-weight:normal;letter-spacing:-0.200px;">Fiber</div>
<div id="rid2" class="t" style="left:148.00px;top:730.70px;font-size:28px;line-height:28px;color:#222;font-weight:normal;letter-spacing:1.400px;">115</div>
<div id="rsz2" class="t" style="left:245.50px;top:730.70px;font-size:28px;line-height:28px;color:#222;font-weight:normal;letter-spacing:-0.400px;">48.8</div>
<div id="rty2" class="t" style="left:386.00px;top:730.70px;font-size:28px;line-height:28px;color:#222;font-weight:normal;letter-spacing:-0.200px;">Metal</div>
<div id="rid3" class="t" style="left:148.00px;top:826.70px;font-size:28px;line-height:28px;color:#222;font-weight:normal;letter-spacing:1.400px;">115</div>
<div id="rsz3" class="t" style="left:245.50px;top:826.70px;font-size:28px;line-height:28px;color:#222;font-weight:normal;letter-spacing:-0.400px;">48.8</div>
<div id="rty3" class="t" style="left:386.00px;top:826.70px;font-size:28px;line-height:28px;color:#222;font-weight:normal;letter-spacing:-0.200px;">Others</div>
<div id="rid4" class="t" style="left:148.00px;top:922.70px;font-size:28px;line-height:28px;color:#222;font-weight:normal;letter-spacing:1.400px;">115</div>
<div id="rsz4" class="t" style="left:245.50px;top:922.70px;font-size:28px;line-height:28px;color:#222;font-weight:normal;letter-spacing:-0.400px;">48.8</div>
<div id="rty4" class="t" style="left:386.00px;top:922.70px;font-size:28px;line-height:28px;color:#222;font-weight:normal;letter-spacing:-0.200px;">Oxidised</div>
<div id="rid5" class="t" style="left:148.00px;top:1018.70px;font-size:28px;line-height:28px;color:#222;font-weight:normal;letter-spacing:1.400px;">115</div>
<div id="rsz5" class="t" style="left:245.50px;top:1018.70px;font-size:28px;line-height:28px;color:#222;font-weight:normal;letter-spacing:-0.400px;">48.8</div>
<div id="rty5" class="t" style="left:386.00px;top:1018.70px;font-size:28px;line-height:28px;color:#222;font-weight:normal;letter-spacing:-0.200px;">Oxidised</div>
<div id="rid6" class="t" style="left:148.00px;top:1114.70px;font-size:28px;line-height:28px;color:#222;font-weight:normal;letter-spacing:1.400px;">115</div>
<div id="rsz6" class="t" style="left:245.50px;top:1114.70px;font-size:28px;line-height:28px;color:#222;font-weight:normal;letter-spacing:-0.400px;">48.8</div>
<div id="rty6" class="t" style="left:386.00px;top:1114.70px;font-size:28px;line-height:28px;color:#222;font-weight:normal;letter-spacing:-0.200px;">Oxidised</div>
<div id="rid7" class="t" style="left:148.00px;top:1210.70px;font-size:28px;line-height:28px;color:#222;font-weight:normal;letter-spacing:1.400px;">115</div>
<div id="rsz7" class="t" style="left:245.50px;top:1210.70px;font-size:28px;line-height:28px;color:#222;font-weight:normal;letter-spacing:-0.400px;">48.8</div>
<div id="rty7" class="t" style="left:386.00px;top:1210.70px;font-size:28px;line-height:28px;color:#222;font-weight:normal;letter-spacing:-0.200px;">Oxidised</div>
<div id="rid8" class="t" style="left:148.00px;top:1306.70px;font-size:28px;line-height:28px;color:#222;font-weight:normal;letter-spacing:1.400px;">115</div>
<div id="rsz8" class="t" style="left:245.50px;top:1306.70px;font-size:28px;line-height:28px;color:#222;font-weight:normal;letter-spacing:-0.400px;">48.8</div>
<div id="rty8" class="t" style="left:386.00px;top:1306.70px;font-size:28px;line-height:28px;color:#222;font-weight:normal;letter-spacing:-0.200px;">Oxidised</div>
<div id="rid9" class="t" style="left:148.00px;top:1402.70px;font-size:28px;line-height:28px;color:#222;font-weight:normal;letter-spacing:1.400px;">115</div>
<div id="rsz9" class="t" style="left:245.50px;top:1402.70px;font-size:28px;line-height:28px;color:#222;font-weight:normal;letter-spacing:-0.400px;">48.8</div>
<div id="rty9" class="t" style="left:386.00px;top:1402.70px;font-size:28px;line-height:28px;color:#222;font-weight:normal;letter-spacing:-0.200px;">Oxidised</div>
<div id="rid10" class="t" style="left:148.00px;top:1498.70px;font-size:28px;line-height:28px;color:#222;font-weight:normal;letter-spacing:1.400px;">115</div>
<div id="rsz10" class="t" style="left:245.50px;top:1498.70px;font-size:28px;line-height:28px;color:#222;font-weight:normal;letter-spacing:-0.400px;">48.8</div>
<div id="rty10" class="t" style="left:386.00px;top:1498.70px;font-size:28px;line-height:28px;color:#222;font-weight:normal;letter-spacing:-0.200px;">Oxidised</div>
<div id="rid11" class="t" style="left:148.00px;top:1594.70px;font-size:28px;line-height:28px;color:#222;font-weight:normal;letter-spacing:1.400px;">115</div>
<div id="rsz11" class="t" style="left:245.50px;top:1594.70px;font-size:28px;line-height:28px;color:#222;font-weight:normal;letter-spacing:-0.400px;">48.8</div>
<div id="rty11" class="t" style="left:386.00px;top:1594.70px;font-size:28px;line-height:28px;color:#222;font-weight:normal;letter-spacing:-0.200px;">Oxidised</div>
<div id="rid12" class="t" style="left:148.00px;top:1690.70px;font-size:28px;line-height:28px;color:#222;font-weight:normal;letter-spacing:1.400px;">115</div>
<div id="rsz12" class="t" style="left:245.50px;top:1690.70px;font-size:28px;line-height:28px;color:#222;font-weight:normal;letter-spacing:-0.400px;">48.8</div>
<div id="rty12" class="t" style="left:386.00px;top:1690.70px;font-size:28px;line-height:28px;color:#222;font-weight:normal;letter-spacing:-0.200px;">Oxidised</div>
<div id="rid13" class="t" style="left:148.00px;top:1786.70px;font-size:28px;line-height:28px;color:#222;font-weight:normal;letter-spacing:1.400px;">115</div>
<div id="rsz13" class="t" style="left:245.50px;top:1786.70px;font-size:28px;line-height:28px;color:#222;font-weight:normal;letter-spacing:-0.400px;">48.8</div>
<div id="rty13" class="t" style="left:386.00px;top:1786.70px;font-size:28px;line-height:28px;color:#222;font-weight:normal;letter-spacing:-0.200px;">Oxidised</div>
<div id="lg1" class="t" style="left:87.50px;top:1875.78px;font-size:24px;line-height:24px;color:#222;font-weight:normal;letter-spacing:-0.114px;">Oxidised</div>
<div id="lg2" class="t" style="left:248.00px;top:1875.78px;font-size:24px;line-height:24px;color:#222;font-weight:normal;letter-spacing:0.550px;">Metal</div>
<div id="lg3" class="t" style="left:376.50px;top:1875.78px;font-size:24px;line-height:24px;color:#222;font-weight:normal;letter-spacing:-0.350px;">Fiber</div>
<div id="lg4" class="t" style="left:498.00px;top:1875.78px;font-size:24px;line-height:24px;color:#222;font-weight:normal;letter-spacing:-0.360px;">Others</div>
<div id="chbtn" class="t" style="left:210.50px;top:1958.48px;font-size:24px;line-height:24px;color:#00267a;font-weight:bold;letter-spacing:1.200px;">CHANGE HISTORY</div>
<div id="title" class="t" style="left:664.50px;top:214.41px;font-size:45px;line-height:45px;color:#00267a;font-weight:normal;letter-spacing:0.383px;">Batch ID: T00000000 / Defect Reference: 30290/127</div>
<div id="date1" class="t" style="left:1765.80px;top:224.81px;font-size:32px;line-height:32px;color:#333;font-weight:normal;letter-spacing:1.111px;">02/08/2023</div>
<div id="date2" class="t" style="left:1966.10px;top:224.81px;font-size:32px;line-height:32px;color:#333;font-weight:normal;letter-spacing:-0.143px;">12:03:16</div>
<div id="dum1" class="t" style="left:705.00px;top:407.75px;font-size:72px;line-height:72px;color:#f8f8f8;font-weight:bold;letter-spacing:0.000px;transform:scaleX(1.15);transform-origin:0 0;-webkit-text-stroke:2px #f8f8f8">Dummy</div>
<div id="dum2" class="t" style="left:734.00px;top:495.25px;font-size:72px;line-height:72px;color:#f8f8f8;font-weight:bold;letter-spacing:0.000px;transform:scaleX(1.158);transform-origin:0 0;-webkit-text-stroke:2px #f8f8f8">defect</div>
<div id="tl0_0" class="t" style="left:1093.30px;top:325.78px;font-size:22px;line-height:22px;color:#00267a;font-weight:bold;letter-spacing:2.714px;">BATCH ID</div>
<div id="tv0_0" class="t" style="left:1386.00px;top:323.00px;font-size:28px;line-height:28px;color:#222;font-weight:normal;letter-spacing:0.067px;">2030031246</div>
<div id="tl0_1" class="t" style="left:1094.30px;top:389.78px;font-size:22px;line-height:22px;color:#00267a;font-weight:bold;letter-spacing:2.185px;">GRADE/PRODUCT</div>
<div id="tv0_1" class="t" style="left:1386.00px;top:387.00px;font-size:28px;line-height:28px;color:#222;font-weight:normal;letter-spacing:-0.989px;">OE3515G</div>
<div id="tl0_2" class="t" style="left:1093.30px;top:453.78px;font-size:22px;line-height:22px;color:#00267a;font-weight:bold;letter-spacing:2.929px;">LIMS SAMPLE NR.</div>
<div id="tv0_2" class="t" style="left:1386.00px;top:451.00px;font-size:28px;line-height:28px;color:#222;font-weight:normal;letter-spacing:0.111px;">8239970</div>
<div id="tl0_3" class="t" style="left:1094.30px;top:517.78px;font-size:22px;line-height:22px;color:#00267a;font-weight:bold;letter-spacing:2.543px;">CUTOUTS NR.</div>
<div id="tv0_3" class="t" style="left:1386.00px;top:515.00px;font-size:28px;line-height:28px;color:#222;font-weight:normal;letter-spacing:0.067px;">7</div>
<div id="tl0_4" class="t" style="left:1094.30px;top:581.78px;font-size:22px;line-height:22px;color:#00267a;font-weight:bold;letter-spacing:2.876px;">CONTAMINANT TYPE</div>
<div id="tv0_4" class="t" style="left:1429.70px;top:579.00px;font-size:28px;line-height:28px;color:#222;font-weight:normal;letter-spacing:0.067px;">Oxidised</div>
<div id="tl0_5" class="t" style="left:1094.30px;top:645.78px;font-size:22px;line-height:22px;color:#00267a;font-weight:bold;letter-spacing:2.393px;">SUBTYPE</div>
<div id="tv0_5" class="t" style="left:1386.00px;top:643.00px;font-size:28px;line-height:28px;color:#222;font-weight:normal;letter-spacing:0.067px;">-</div>
<div id="tl1_0" class="t" style="left:1687.80px;top:325.78px;font-size:22px;line-height:22px;color:#00267a;font-weight:bold;letter-spacing:3.143px;">SIZE</div>
<div id="tv1_0" class="t" style="left:1968.00px;top:323.00px;font-size:28px;line-height:28px;color:#222;font-weight:normal;letter-spacing:1.844px;">119</div>
<div id="tl1_1" class="t" style="left:1686.80px;top:389.78px;font-size:22px;line-height:22px;color:#00267a;font-weight:bold;letter-spacing:2.698px;">PREDICTION</div>
<div id="tv1_1" class="t" style="left:1968.00px;top:387.00px;font-size:28px;line-height:28px;color:#222;font-weight:normal;letter-spacing:-0.262px;">Unknown (52.62%)</div>
<div id="tl1_2" class="t" style="left:1687.80px;top:453.78px;font-size:22px;line-height:22px;color:#00267a;font-weight:bold;letter-spacing:2.279px;">SHAPE FACTOR</div>
<div id="tv1_2" class="t" style="left:1968.00px;top:451.00px;font-size:28px;line-height:28px;color:#222;font-weight:normal;letter-spacing:0.311px;">1.21</div>
<div id="tl1_3" class="t" style="left:1686.80px;top:517.78px;font-size:22px;line-height:22px;color:#00267a;font-weight:bold;letter-spacing:2.607px;">PRODUCTION LINE</div>
<div id="tv1_3" class="t" style="left:1968.00px;top:515.00px;font-size:28px;line-height:28px;color:#222;font-weight:normal;letter-spacing:0.067px;">RX1</div>
<div id="tl1_4" class="t" style="left:1686.80px;top:581.78px;font-size:22px;line-height:22px;color:#00267a;font-weight:bold;letter-spacing:2.893px;">INSTRUMENT TYPE</div>
<div id="tv1_4" class="t" style="left:1970.00px;top:579.00px;font-size:28px;line-height:28px;color:#222;font-weight:normal;letter-spacing:-2.556px;">TCA</div>
<div id="tl1_5" class="t" style="left:1686.80px;top:645.78px;font-size:22px;line-height:22px;color:#00267a;font-weight:bold;letter-spacing:3.143px;">METHOD</div>
<div id="tv1_5" class="t" style="left:1968.00px;top:643.00px;font-size:28px;line-height:28px;color:#222;font-weight:normal;letter-spacing:0.067px;">-</div>
<div id="tl2_0" class="t" style="left:2281.30px;top:325.77px;font-size:20px;line-height:20px;color:#00267a;font-weight:bold;letter-spacing:2.393px;">DETECTION LEVEL</div>
<div id="tv2_0" class="t" style="left:2561.00px;top:323.00px;font-size:28px;line-height:28px;color:#222;font-weight:normal;letter-spacing:0.094px;">Black</div>
<div id="tl2_1" class="t" style="left:2281.30px;top:389.78px;font-size:22px;line-height:22px;color:#00267a;font-weight:bold;letter-spacing:2.293px;">DEFECT INFO</div>
<div id="tv2_1" class="t" style="left:2561.00px;top:387.00px;font-size:28px;line-height:28px;color:#222;font-weight:normal;letter-spacing:0.244px;">Blue</div>
<div id="tl2_2" class="t" style="left:2282.30px;top:453.78px;font-size:22px;line-height:22px;color:#00267a;font-weight:bold;letter-spacing:2.487px;">ANALYSIS REQ. NR.</div>
<div id="tv2_2" class="t" style="left:2563.00px;top:451.00px;font-size:28px;line-height:28px;color:#00a3dc;font-weight:normal;letter-spacing:-1.356px;text-decoration:underline;text-underline-offset:4px;text-decoration-thickness:2px">REQ_SteLD_2024_1</div>
<div id="tl2_3" class="t" style="left:2281.30px;top:517.78px;font-size:22px;line-height:22px;color:#00267a;font-weight:bold;letter-spacing:2.518px;">MICROSCOPE ID</div>
<div id="tv2_3" class="t" style="left:2563.00px;top:515.00px;font-size:28px;line-height:28px;color:#222;font-weight:normal;letter-spacing:-1.428px;">ANQC9_ZEISS9</div>
<div id="tl2_4" class="t" style="left:2281.30px;top:581.78px;font-size:22px;line-height:22px;color:#00267a;font-weight:bold;letter-spacing:2.935px;">INSTRUMENT ID</div>
<div id="tv2_4" class="t" style="left:2563.00px;top:579.00px;font-size:28px;line-height:28px;color:#222;font-weight:normal;letter-spacing:-1.156px;">ANQC012_TCA</div>
<div id="tl2_5" class="t" style="left:2281.30px;top:645.78px;font-size:22px;line-height:22px;color:#00267a;font-weight:bold;letter-spacing:2.518px;overflow:hidden;width:267.5px">EQUIPMENT LOCATIO</div>
<div id="tv2_5" class="t" style="left:2563.00px;top:643.00px;font-size:28px;line-height:28px;color:#222;font-weight:normal;letter-spacing:-0.806px;">AntQC</div>
<div id="tab0" class="t" style="left:831.60px;transform:translateX(-50%);top:787.10px;font-size:28px;line-height:28px;color:#333;font-weight:normal;letter-spacing:0.578px;">Microscope</div>
<div id="tab1" class="t" style="left:1195.10px;transform:translateX(-50%);top:787.10px;font-size:28px;line-height:28px;color:#00267a;font-weight:normal;letter-spacing:-0.291px;">SEM Analysis</div>
<div id="tab2" class="t" style="left:1558.20px;transform:translateX(-50%);top:787.10px;font-size:28px;line-height:28px;color:#333;font-weight:normal;letter-spacing:-0.150px;">FTIR Analysis</div>
<div id="tab3" class="t" style="left:1921.60px;transform:translateX(-50%);top:787.10px;font-size:28px;line-height:28px;color:#333;font-weight:normal;letter-spacing:-1.440px;">HH-XRF</div>
<div id="tab4" class="t" style="left:2286.70px;transform:translateX(-50%);top:787.10px;font-size:28px;line-height:28px;color:#333;font-weight:normal;letter-spacing:0.100px;">Manual Upload</div>
<div id="tab5" class="t" style="left:2649.80px;transform:translateX(-50%);top:787.10px;font-size:28px;line-height:28px;color:#333;font-weight:normal;letter-spacing:0.100px;">Potential Sources</div>
<div id="semh" class="t" style="left:668.50px;top:884.13px;font-size:36px;line-height:36px;color:#00267a;font-weight:normal;letter-spacing:0.400px;">SEM Analysis</div>
<div id="fh1" class="t" style="left:1149.00px;top:1014.38px;font-size:22px;line-height:22px;color:#00267a;font-weight:bold;letter-spacing:2.875px;">FILE NAME</div>
<div id="fh2" class="t" style="left:1704.20px;top:1014.38px;font-size:22px;line-height:22px;color:#00267a;font-weight:bold;letter-spacing:2.564px;">MICROSCOPE</div>
<div id="fh3" class="t" style="left:2260.20px;top:1014.38px;font-size:22px;line-height:22px;color:#00267a;font-weight:bold;letter-spacing:2.342px;">UPDATED BY</div>
<div id="fv1" class="t" style="left:1148.50px;top:1079.30px;font-size:28px;line-height:28px;color:#222;font-weight:normal;letter-spacing:-0.260px;">K2092-SEM-2011026803_1069_13121</div>
<div id="fv2" class="t" style="left:1705.20px;top:1079.30px;font-size:28px;line-height:28px;color:#222;font-weight:normal;letter-spacing:0.991px;">01/08/2023</div>
<div id="fv2b" class="t" style="left:1705.20px;top:1116.38px;font-size:24px;line-height:24px;color:#888;font-weight:normal;letter-spacing:-0.029px;">08:04:15</div>
<div id="fv3" class="t" style="left:2261.20px;top:1079.30px;font-size:28px;line-height:28px;color:#222;font-weight:normal;letter-spacing:0.310px;">Johan Martin</div>
<div id="cmh" class="t" style="left:1165.50px;top:1231.22px;font-size:21px;line-height:21px;color:#222;font-weight:bold;letter-spacing:2.800px;">COMMENT</div>
<div id="cm1" class="t" style="left:1165.00px;top:1278.70px;font-size:28px;line-height:28px;color:#777;font-weight:normal;letter-spacing:0.046px;">Proin tempus elementum sapien. Orci varius natoque penatibus et magnis dis parturient montes, nascetur ridiculus mus. Etiam</div>
<div id="cm2" class="t" style="left:1166.00px;top:1318.20px;font-size:28px;line-height:28px;color:#777;font-weight:normal;letter-spacing:0.038px;">dictum augue at nisi tempus feugiat. Proin non tempus sapien, non tincidunt libero. Sed blandit at metus vitae.</div>
<div id="spot" class="t" style="left:1166.50px;top:1454.82px;font-size:21px;line-height:21px;color:#222;font-weight:bold;letter-spacing:2.600px;">SPOT 1</div>
<div id="yl0" class="t" style="right:1649.30px;top:1516.58px;font-size:24px;line-height:24px;color:#666;font-weight:normal;letter-spacing:0.200px;">5k</div>
<div id="yl1" class="t" style="right:1648.30px;top:1580.38px;font-size:24px;line-height:24px;color:#666;font-weight:normal;letter-spacing:-0.800px;">4k</div>
<div id="yl2" class="t" style="right:1648.30px;top:1644.18px;font-size:24px;line-height:24px;color:#666;font-weight:normal;letter-spacing:-0.800px;">3k</div>
<div id="yl3" class="t" style="right:1648.30px;top:1707.98px;font-size:24px;line-height:24px;color:#666;font-weight:normal;letter-spacing:-0.800px;">2k</div>
<div id="yl4" class="t" style="right:1648.30px;top:1771.78px;font-size:24px;line-height:24px;color:#666;font-weight:normal;letter-spacing:-0.800px;">1k</div>
<div id="yl5" class="t" style="right:1646.30px;top:1835.58px;font-size:24px;line-height:24px;color:#666;font-weight:normal;letter-spacing:1.200px;">0</div>
<div id="xl0" class="t" style="left:1261.90px;transform:translateX(-50%);top:1868.48px;font-size:24px;line-height:24px;color:#666;font-weight:normal;letter-spacing:-0.800px;">0</div>
<div id="xl1" class="t" style="left:1444.70px;transform:translateX(-50%);top:1868.48px;font-size:24px;line-height:24px;color:#666;font-weight:normal;letter-spacing:-0.533px;">2.5k</div>
<div id="xl2" class="t" style="left:1627.90px;transform:translateX(-50%);top:1868.48px;font-size:24px;line-height:24px;color:#666;font-weight:normal;letter-spacing:-0.600px;">5k</div>
<div id="xl3" class="t" style="left:1810.90px;transform:translateX(-50%);top:1868.48px;font-size:24px;line-height:24px;color:#666;font-weight:normal;letter-spacing:-0.200px;">7.5k</div>
<div id="xl4" class="t" style="left:1994.50px;transform:translateX(-50%);top:1868.48px;font-size:24px;line-height:24px;color:#666;font-weight:normal;letter-spacing:0.300px;">10k</div>
<div id="xl5" class="t" style="left:2177.50px;transform:translateX(-50%);top:1868.48px;font-size:24px;line-height:24px;color:#666;font-weight:normal;letter-spacing:0.300px;">12.5k</div>
<div id="xl6" class="t" style="left:2360.30px;transform:translateX(-50%);top:1868.48px;font-size:24px;line-height:24px;color:#666;font-weight:normal;letter-spacing:0.700px;">15k</div>
<div id="xl7" class="t" style="left:2544.10px;transform:translateX(-50%);top:1868.48px;font-size:24px;line-height:24px;color:#666;font-weight:normal;letter-spacing:-0.050px;">17.5k</div>
<div id="xl8" class="t" style="left:2727.10px;transform:translateX(-50%);top:1868.48px;font-size:24px;line-height:24px;color:#666;font-weight:normal;letter-spacing:-0.300px;">20k</div>
<div id="energy" class="t" style="left:1925.00px;top:1908.38px;font-size:24px;line-height:24px;color:#aaa;font-weight:normal;letter-spacing:-0.340px;">Energy [eV]</div>
<div id="wp" class="t" style="left:1167.20px;top:2038.22px;font-size:21px;line-height:21px;color:#222;font-weight:bold;letter-spacing:2.187px;">WEIGHT PERCENTAGE</div>
</body></html>
